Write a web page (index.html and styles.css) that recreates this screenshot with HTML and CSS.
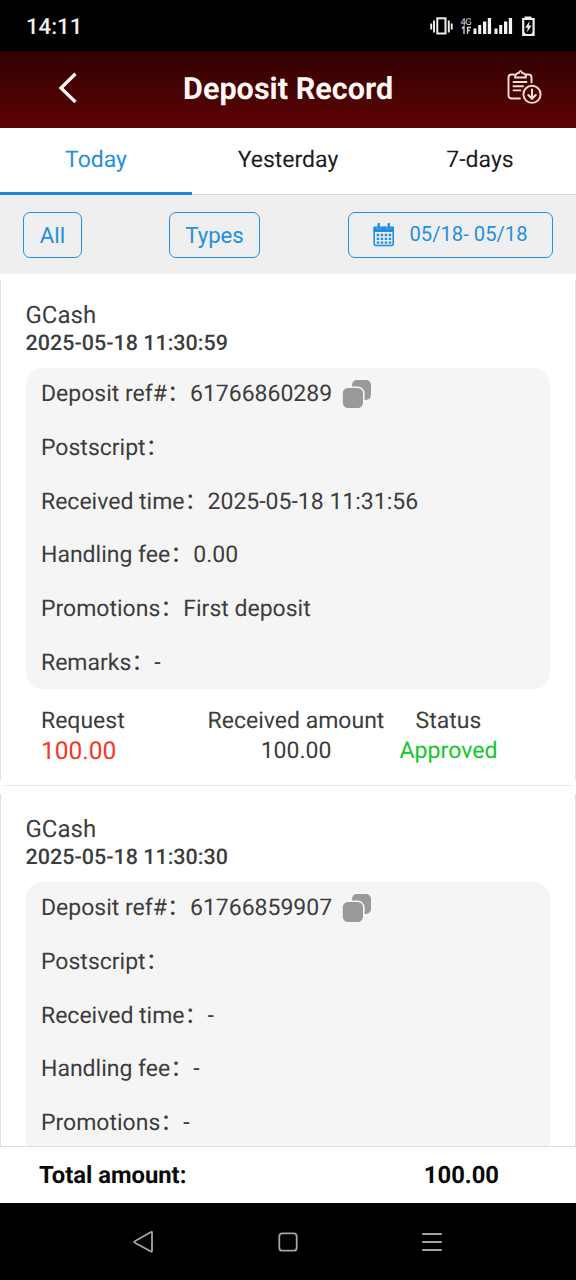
FILE: index.html
```html
<!DOCTYPE html>
<html lang="en">
<head>
<meta charset="utf-8">
<title>Deposit Record</title>
<link rel="stylesheet" href="styles.css">
</head>
<body>
<div class="screen">
  <div class="status-bar">
    <span class="clock">14:11</span>
    <svg class="status-icons" width="108" height="24" viewBox="0 0 108 24" fill="none">
      <g stroke="#eee" stroke-width="1.900"><path d="M1.200 9.500v6M4 6.500v12M18.800 6.500v12M21.700 9.500v6"/><rect x="7.300" y="4.300" width="8.200" height="15.200" stroke-width="2"/></g>
      <text x="30.500" y="11" class="net-label">4G</text>
      <path d="M34 20V12.500l-2 2M37.500 20v-6.500h3.500M37.500 16.500h2.500" stroke="#ddd" stroke-width="1.300"/>
      <path d="M43.500 14.500h3v5.500h-3zM48.200 11h3v9h-3zM53 7.500h3.300V20H53zM57.800 4h3.300v16h-3.300zM64.500 14.500h3v5.500h-3zM69.200 11h3v9h-3zM74 7.500h3.300V20H74zM78.800 4h3.300v16h-3.300z" fill="#f4f4f4"/>
      <path d="M94.500 3.500h7M93.200 5h10.400v16H93.200z" stroke="#eee" stroke-width="2.200"/>
      <path d="M93 17l4 4h-4zM104 17l-4 4h4zM99.600 7l-4.400 6.700h2.600l-.8 4.800 4.600-7h-2.700z" fill="#eee"/>
    </svg>
  </div>
  <header class="title-bar">
    <svg class="back" width="20" height="32" viewBox="0 0 20 32" fill="none" stroke="#fff6f2" stroke-width="3.300"><path d="M17.500 1.800 3 16l14.500 14"/></svg>
    <h1>Deposit Record</h1>
    <svg class="export" width="36" height="36" viewBox="0 0 36 36" fill="none" stroke="#f8dfd3" stroke-width="1.900" stroke-linecap="round" stroke-linejoin="round">
      <path d="M8 5.500H5.500Q2.500 5.500 2.500 8.500v18q0 3 3 3H14M20 5.500h2.500q3 0 3 3v4.800M9 8.500h11q0-4-4-4.600-1.500-4-3-0-4 .6-4 4.600z"/><path d="M7.500 13h13M7.500 17.200h9.500M7.500 21.400h7"/><circle cx="26" cy="25.300" r="8.600"/><path d="M26 20.500v9M22.300 26l3.700 3.800 3.700-3.800" stroke-width="2.100"/>
    </svg>
  </header>
  <nav class="tabs"><a class="tab active">Today</a><a class="tab">Yesterday</a><a class="tab">7-days</a></nav>
  <div class="filters">
    <button class="filter all">All</button>
    <button class="filter types">Types</button>
    <button class="filter dates">
      <svg width="22" height="24" viewBox="0 0 22 24" fill="none">
        <rect x="1.200" y="4.500" width="19" height="18" rx="1.500" stroke="#1f8de0" stroke-width="1.600"/>
        <path d="M.5 3.500h3v2.500h4V3.500h6v2.500h4V3.500h3.500V9H.5z" fill="#1f8de0"/>
        <path d="M5.700 1v4.500M15.800 1v4.500" stroke="#1f8de0" stroke-width="2.400" stroke-linecap="round"/>
        <path d="M3.700 12h14.500M3.700 15.800h14.500M3.700 19.600h14.500" stroke="#1f8de0" stroke-width="2.300" stroke-dasharray="2.500 1.500"/>
      </svg>
      <span>05/18- 05/18</span>
    </button>
  </div>
  <main class="records">
    <article class="record">
      <div class="method">GCash</div>
      <div class="created">2025-05-18 11:30:59</div>
      <div class="details">
        <div class="line">Deposit ref#&#65306;61766860289<svg class="copy" width="30" height="30" viewBox="0 0 30 30" fill="#999"><rect x="10" y="1" width="19" height="20" rx="5"/><rect x="0" y="8.300" width="21.800" height="21.500" rx="6" stroke="#f5f5f5" stroke-width="1.600"/></svg></div>
        <div class="line">Postscript&#65306;</div>
        <div class="line">Received time&#65306;2025-05-18 11:31:56</div>
        <div class="line">Handling fee&#65306;0.00</div>
        <div class="line">Promotions&#65306;First deposit</div>
        <div class="line">Remarks&#65306;-</div>
      </div>
      <div class="summary">
        <div class="cell request"><div>Request</div><div class="value red">100.00</div></div>
        <div class="cell received"><div>Received amount</div><div class="value">100.00</div></div>
        <div class="cell status"><div>Status</div><div class="value green">Approved</div></div>
      </div>
    </article>
    <article class="record">
      <div class="method">GCash</div>
      <div class="created">2025-05-18 11:30:30</div>
      <div class="details">
        <div class="line">Deposit ref#&#65306;61766859907<svg class="copy" width="30" height="30" viewBox="0 0 30 30" fill="#999"><rect x="10" y="1" width="19" height="20" rx="5"/><rect x="0" y="8.300" width="21.800" height="21.500" rx="6" stroke="#f5f5f5" stroke-width="1.600"/></svg></div>
        <div class="line">Postscript&#65306;</div>
        <div class="line">Received time&#65306;-</div>
        <div class="line">Handling fee&#65306;-</div>
        <div class="line">Promotions&#65306;-</div>
      </div>
    </article>
  </main>
  <footer class="total"><span>Total amount:</span><span class="total-value">100.00</span></footer>
  <div class="nav-bar">
    <svg width="24" height="24" viewBox="0 0 24 24"><path d="M20 2.500v18.500q0 1-1 .5L2.800 12.700q-1.300-.7 0-1.400L19 2q1-.5 1 .5z"/></svg>
    <svg width="24" height="24" viewBox="0 0 24 24"><rect x="3.300" y="3.300" width="17.400" height="17.400" rx="3"/></svg>
    <svg width="24" height="24" viewBox="0 0 24 24"><path d="M2.200 4h19.600M2.200 12h19.600M2.200 20h19.600"/></svg>
  </div>
</div>
</body>
</html>
```
FILE: styles.css
```css
* { box-sizing: border-box; }
body { margin: 0; background: #fff; color: #3c3c3c; font-family: Roboto, "Noto Sans CJK SC", sans-serif; font-size: 23px; text-rendering: geometricPrecision; }
.screen { height: 1280px; display: flex; flex-direction: column; overflow: hidden; }
.status-bar { height: 51px; flex: none; background: #000; display: flex; justify-content: space-between; align-items: center; padding: 1px 38px 0 26px; }
.clock { color: #f1f1f1; font-size: 22.2px; font-weight: 500; padding-top: 2px; }
.net-label { font-size: 9.5px; fill: #ddd; letter-spacing: -.5px; }
.title-bar { height: 77px; flex: none; background: linear-gradient(#310000, #5d0404); display: grid; grid-template-columns: 183px 1fr 183px; align-items: center; }
.back { margin: -3px 0 0 58px; }
.title-bar h1 { margin: 0; color: #fff8f5; font-size: 30.6px; line-height: 36px; font-weight: 700; text-align: center; white-space: nowrap; }
.export { margin: -6px 0 0 113px; }
.tabs { height: 67px; flex: none; display: grid; grid-template-columns: repeat(3, 1fr); border-bottom: 1px solid #d5d5d5; }
.tab { height: 67px; color: #1c1c1c; line-height: 63px; text-align: center; }
.active { color: #248fe0; border-bottom: 3px solid #1f8ad8; }
.filters { height: 79px; flex: none; background: #efefef; display: flex; align-items: center; padding: 0 23px; }
.filter { height: 46px; padding: 0; border: 1.6px solid #2490df; border-radius: 7px; background: transparent; color: #248fe0; font: inherit; font-size: 22.2px; }
.all { width: 59px; }
.types { width: 91px; margin-left: 87px; }
.dates { width: 205px; margin-left: auto; display: flex; align-items: center; justify-content: center; gap: 14px; font-size: 20.2px; padding: 0 0 2px; }
.dates svg { margin-top: 2px; }
.records { height: 872px; flex: none; overflow: hidden; }
.record {
  height: 512px;
  padding: 27px 26px 0;
  background:
    linear-gradient(#e2e2e2, #e2e2e2) left center / 1px calc(100% - 12px) no-repeat,
    linear-gradient(#e2e2e2, #e2e2e2) right center / 1px calc(100% - 12px) no-repeat,
    linear-gradient(#e8e8e8, #e8e8e8) center bottom / calc(100% - 8px) 1px no-repeat;
}
.record + .record { margin-top: 2px; }
.method { font-size: 24px; line-height: 28px; margin-left: -.5px; }
.created { font-size: 21.5px; line-height: 30px; font-weight: 500; margin-left: -.5px; }
.details { margin-top: 9px; height: 321px; background: #f5f5f5; border-radius: 16px; padding: 0 15px; }
.line { height: 53.8px; line-height: 51px; display: flex; align-items: flex-start; white-space: nowrap; }
.copy { margin: 11px 0 0 10px; }
.summary { display: grid; grid-template-columns: 166px 178px 127px; padding: 17px 0 0 15px; line-height: 30px; text-align: center; white-space: nowrap; }
.request { text-align: left; }
.red { color: #f13822; font-size: 24.5px; }
.green { color: #12c82c; font-size: 23.1px; }
.total { height: 57px; flex: none; border-top: 1px solid #ddd; display: flex; justify-content: space-between; align-items: center; padding: 0 77px 0 39px; color: #080808; font-size: 23.8px; font-weight: 700; }
.nav-bar { height: 78px; flex: none; background: #000; display: flex; justify-content: space-between; align-items: center; padding: 0 132px; }
.nav-bar svg { fill: none; stroke: #a5a5a5; stroke-width: 1.8; }
```
